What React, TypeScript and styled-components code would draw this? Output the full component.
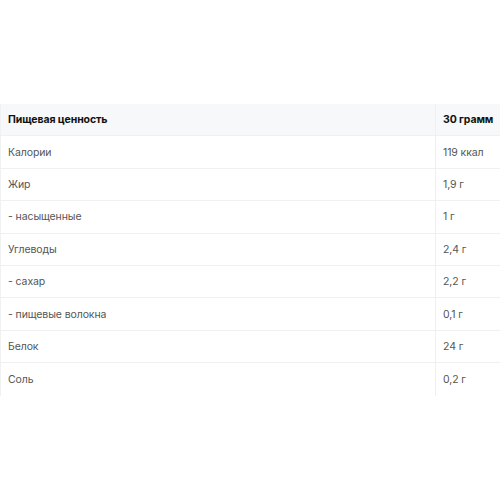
import React from "react";
import styled, { createGlobalStyle } from "styled-components";

const Global = createGlobalStyle`
  html, body { margin: 0; padding: 0; background: #fff; }
  body { font-family: Inter, "Noto Sans", sans-serif; }
`;

const Page = styled.div`
  width: 500px;
  height: 500px;
  padding-top: 104px;
  box-sizing: border-box;
  overflow: hidden;
`;

const Table = styled.div`
  display: grid;
  grid-template-columns: 434px 1fr;
  width: 500px;
  border-left: 1px solid #f0f1f3;
  box-sizing: border-box;
`;

const Cell = styled.div<{ $head?: boolean; $value?: boolean; $last?: boolean }>`
  height: 32.4px;
  box-sizing: border-box;
  display: flex;
  align-items: center;
  padding-left: 7px;
  font-size: 10.5px;
  letter-spacing: -0.1px;
  font-weight: ${(p) => (p.$head ? 700 : 400)};
  color: ${(p) => (p.$head ? "#111" : "#555")};
  background: ${(p) => (p.$head ? "#f7f8f9" : "#fff")};
  border-bottom: ${(p) => (p.$last ? "none" : "1px solid #eef0f2")};
  border-left: ${(p) => (p.$value ? "1px solid #eef0f2" : "none")};
`;

const rows: [string, string][] = [
  ["Калории", "119 ккал"],
  ["Жир", "1,9 г"],
  ["- насыщенные", "1 г"],
  ["Углеводы", "2,4 г"],
  ["- сахар", "2,2 г"],
  ["- пищевые волокна", "0,1 г"],
  ["Белок", "24 г"],
  ["Соль", "0,2 г"],
];

export default function App() {
  return (
    <>
      <Global />
      <Page>
        <Table>
          <Cell $head>Пищевая ценность</Cell>
          <Cell $head $value>30 грамм</Cell>
          {rows.map(([k, v], i) => (
            <React.Fragment key={k}>
              <Cell $last={i === rows.length - 1}>{k}</Cell>
              <Cell $value $last={i === rows.length - 1}>{v}</Cell>
            </React.Fragment>
          ))}
        </Table>
      </Page>
    </>
  );
}
